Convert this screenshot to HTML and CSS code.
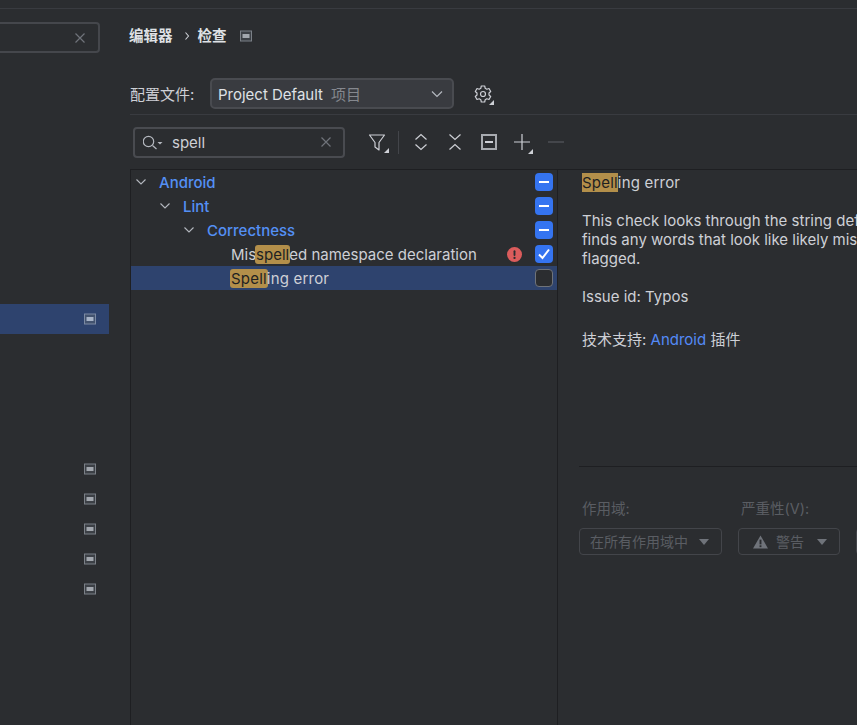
FILE: index.html
```html
<!DOCTYPE html>
<html lang="zh">
<head>
<meta charset="utf-8">
<title>检查</title>
<link rel="stylesheet" href="styles.css">
</head>
<body>
<div class="topbar"></div>
<div class="layout">
  <aside class="sidebar">
    <div class="side-search"><svg class="ico12" viewBox="0 0 12 12"><path d="M1.500 1.500l9 9M10.500 1.500l-9 9" stroke="#6f737a" stroke-width="1.200" fill="none"/></svg></div>
    <ul class="side-list">
      <li class="side-row selected"><svg class="proj" viewBox="0 0 12 12"><rect x=".5" y="1" width="11" height="10" fill="#43536f" stroke="#7c8aa3"/><rect x="2.500" y="4" width="7" height="4" fill="#a8b4c8"/></svg></li>
      <li class="side-spacer"></li>
      <li class="side-row"><svg class="proj" viewBox="0 0 12 12"><rect x=".5" y="1" width="11" height="10" fill="#3c4046" stroke="#7b8087"/><rect x="2.500" y="4" width="7" height="4" fill="#a2a7ae"/></svg></li>
      <li class="side-row"><svg class="proj" viewBox="0 0 12 12"><rect x=".5" y="1" width="11" height="10" fill="#3c4046" stroke="#7b8087"/><rect x="2.500" y="4" width="7" height="4" fill="#a2a7ae"/></svg></li>
      <li class="side-row"><svg class="proj" viewBox="0 0 12 12"><rect x=".5" y="1" width="11" height="10" fill="#3c4046" stroke="#7b8087"/><rect x="2.500" y="4" width="7" height="4" fill="#a2a7ae"/></svg></li>
      <li class="side-row"><svg class="proj" viewBox="0 0 12 12"><rect x=".5" y="1" width="11" height="10" fill="#3c4046" stroke="#7b8087"/><rect x="2.500" y="4" width="7" height="4" fill="#a2a7ae"/></svg></li>
      <li class="side-row"><svg class="proj" viewBox="0 0 12 12"><rect x=".5" y="1" width="11" height="10" fill="#3c4046" stroke="#7b8087"/><rect x="2.500" y="4" width="7" height="4" fill="#a2a7ae"/></svg></li>
    </ul>
  </aside>

  <main class="main">
    <div class="crumbs">
      <span class="crumb">编辑器</span>
      <svg class="crumb-sep" viewBox="0 0 6 10"><path d="M1.500 1.500L4.500 5 1.500 8.500" stroke="#ced0d6" stroke-width="1.100" fill="none"/></svg>
      <span class="crumb">检查</span>
      <svg class="proj crumb-proj" viewBox="0 0 12 12"><rect x=".5" y="1" width="11" height="10" fill="#3c4046" stroke="#7b8087"/><rect x="2.500" y="4" width="7" height="4" fill="#a2a7ae"/></svg>
    </div>

    <div class="profile">
      <span class="profile-label">配置文件:</span>
      <div class="combo">
        <span class="combo-name">Project Default</span>
        <span class="combo-hint">项目</span>
        <svg class="combo-arrow" viewBox="0 0 12 8"><path d="M1 1.500L6 6.500 11 1.500" stroke="#b4b8bf" stroke-width="1.200" fill="none"/></svg>
      </div>
      <span class="gear">
        <svg width="20" height="20" viewBox="0 0 20 20"><path d="M8.300 2h3.400l.5 2.300 1.600.9 2.200-.7 1.700 3-1.700 1.500v2l1.700 1.500-1.700 3-2.200-.7-1.600.9-.5 2.300H8.300l-.5-2.300-1.600-.9-2.200.7-1.700-3L4 11V9L2.300 7.500l1.700-3 2.200.7 1.600-.9z" stroke="#ced0d6" stroke-width="1.200" fill="none" stroke-linejoin="round"/><circle cx="10" cy="10" r="2.500" stroke="#ced0d6" stroke-width="1.200" fill="none"/></svg>
        <i class="corner"></i>
      </span>
    </div>

    <div class="toolbar">
      <div class="filter">
        <svg class="search-ico" viewBox="0 0 20 16"><circle cx="5.500" cy="7.500" r="5.200" stroke="#b4b8bf" stroke-width="1.200" fill="none"/><path d="M9.500 11.500l4 3.500" stroke="#b4b8bf" stroke-width="1.200"/><path d="M14.500 8h5L17 10.500z" fill="#b4b8bf"/></svg>
        <span class="filter-text">spell</span>
        <svg class="ico12 filter-x" viewBox="0 0 12 12"><path d="M1.500 1.500l9 9M10.500 1.500l-9 9" stroke="#6f737a" stroke-width="1.200" fill="none"/></svg>
      </div>
      <div class="tools">
        <span class="tool t-filter"><svg width="18" height="20" viewBox="0 0 18 20"><path d="M1.500 3h15l-5.500 7.500V18l-4-3v-4.500z" stroke="#ced0d6" stroke-width="1.200" fill="none" stroke-linejoin="round"/></svg><i class="corner"></i></span>
        <i class="tool-sep"></i>
        <span class="tool t-expand"><svg width="14" height="18" viewBox="0 0 14 18"><path d="M1.500 6.500L7 1.500l5.500 5M1.500 11.500L7 16.500l5.500-5" stroke="#ced0d6" stroke-width="1.200" fill="none"/></svg></span>
        <span class="tool t-collapse"><svg width="14" height="18" viewBox="0 0 14 18"><path d="M1.500 1.500L7 6.500l5.500-5M1.500 16.500L7 11.500l5.500 5" stroke="#ced0d6" stroke-width="1.200" fill="none"/></svg></span>
        <span class="tool t-box"><svg width="16" height="16" viewBox="0 0 16 16"><rect x="1" y="1" width="14" height="14" fill="none" stroke="#a8abb0" stroke-width="2"/><rect x="4" y="7" width="8" height="2" fill="#ced0d6"/></svg></span>
        <span class="tool t-plus"><svg width="16" height="16" viewBox="0 0 16 16"><path d="M0 8h16M8 0v16" stroke="#ced0d6" stroke-width="1.200"/></svg><i class="corner"></i></span>
        <span class="tool t-minus"><svg width="16" height="16" viewBox="0 0 16 16"><path d="M0 8h16" stroke="#55585e" stroke-width="1.200"/></svg></span>
      </div>
    </div>

    <div class="panes">
      <div class="tree">
        <div class="node lvl0"><svg class="chev" viewBox="0 0 10 6"><path d="M.5 .5L5 5 9.500 .5" stroke="#b4b8bf" stroke-width="1.100" fill="none"/></svg><span class="group">Android</span><i class="cb mixed"></i></div>
        <div class="node lvl1"><svg class="chev" viewBox="0 0 10 6"><path d="M.5 .5L5 5 9.500 .5" stroke="#b4b8bf" stroke-width="1.100" fill="none"/></svg><span class="group">Lint</span><i class="cb mixed"></i></div>
        <div class="node lvl2"><svg class="chev" viewBox="0 0 10 6"><path d="M.5 .5L5 5 9.500 .5" stroke="#b4b8bf" stroke-width="1.100" fill="none"/></svg><span class="group">Correctness</span><i class="cb mixed"></i></div>
        <div class="node lvl3"><span class="leaf">Mis<mark>spell</mark>ed namespace declaration</span>
          <svg class="err" width="15" height="15" viewBox="0 0 16 16"><circle cx="8" cy="8" r="8" fill="#db5c5c"/><rect x="7" y="3.500" width="2" height="6" rx="1" fill="#2b2d30"/><circle cx="8" cy="11.700" r="1.200" fill="#2b2d30"/></svg>
          <i class="cb checked"><svg width="18" height="18" viewBox="0 0 18 18"><path d="M4 9.500L7.500 13 14 4.500" stroke="#fff" stroke-width="2" fill="none"/></svg></i></div>
        <div class="node lvl3 current"><span class="leaf wide"><mark>Spell</mark>ing error</span><i class="cb empty"></i></div>
      </div>
      <div class="detail">
        <div class="desc">
          <p class="desc-title"><mark class="flat">Spell</mark>ing error</p>
          <p class="desc-para">This check looks through the string definitions, and if it<br>finds any words that look like likely misspellings, they are<br>flagged.</p>
          <p class="desc-para">Issue id: Typos</p>
          <p class="desc-support">技术支持: <span class="link">Android</span> 插件</p>
        </div>
        <div class="opts">
          <div class="opt">
            <label class="opt-label">作用域:</label>
            <div class="ddl ddl-scope"><span>在所有作用域中</span><i class="tri"></i></div>
          </div>
          <div class="opt">
            <label class="opt-label">严重性(V):</label>
            <div class="ddl ddl-sev"><svg width="15" height="14" viewBox="0 0 16 14"><path d="M8 0L16 14H0z" fill="#6f737a"/><rect x="7" y="4.500" width="2" height="5" fill="#2b2d30"/><rect x="7" y="10.500" width="2" height="2" fill="#2b2d30"/></svg><span>警告</span><i class="tri"></i></div>
          </div>
          <div class="ddl ddl-next"></div>
        </div>
      </div>
    </div>
  </main>
</div>
</body>
</html>
```

FILE: styles.css
```css
* { box-sizing: border-box; }
html, body { margin: 0; height: 100%; overflow: hidden; }
body {
  background: #2b2d30;
  color: #ced0d6;
  font: 15px/20px Inter, "Noto Sans CJK SC", sans-serif;
  width: 857px;
  height: 725px;
}
svg { display: block; flex: none; }
i { display: block; }

.topbar { height: 9px; border-bottom: 1px solid #393b40; }
.layout { display: flex; height: 716px; }

.sidebar { width: 109px; flex: none; margin-right: 21px; }
.side-search {
  height: 31px; width: 101px; margin: 13px 0 0 -1px;
  border: 2px solid #45474c; border-left: 0; border-radius: 0 4px 4px 0;
  display: flex; align-items: center; justify-content: flex-end; padding-right: 12px;
}
.ico12 { width: 12px; height: 12px; }
.side-list { list-style: none; margin: 251px 0 0; padding: 0; }
.side-row { height: 30px; display: flex; align-items: center; justify-content: flex-end; padding-right: 13px; }
.side-row.selected { background: #2e436e; }
.side-spacer { height: 120px; }
.proj { width: 12px; height: 12px; }

.main { flex: 1; min-width: 0; display: flex; flex-direction: column; }

.crumbs { display: flex; align-items: center; height: 20px; margin: 17px 0 0 -1px; font-size: 14.500px; font-weight: 600; color: #dfe1e5; }
.crumb-sep { width: 6px; height: 10px; margin: 0 8px 0 11px; }
.crumb-proj { margin-left: 13px; }

.profile { display: flex; align-items: center; height: 31px; margin-top: 32px; }
.profile-label { width: 80px; padding-top: 2px; }
.combo {
  width: 244px; height: 31px; display: flex; align-items: center; padding: 0 9px 0 6px;
  background: #393b40; border: 2px solid #494b50; border-radius: 5px;
}
.combo-name { color: #dfe1e5; padding-top: 2px; }
.combo-hint { color: #85888e; margin-left: 8px; padding-top: 2px; }
.combo-arrow { width: 12px; height: 8px; margin-left: auto; }
.gear { position: relative; margin-left: 19px; width: 20px; height: 20px; }
.corner {
  position: absolute; right: -1px; bottom: -1px; width: 0; height: 0;
  border-style: solid; border-width: 0 0 5px 5px; border-color: transparent transparent #ced0d6 transparent;
}

.toolbar {
  display: flex; align-items: center; height: 55px; margin-top: 5px;
  border-top: 1px solid #393b40;
}
.filter {
  margin-left: 3px; width: 212px; height: 31px; display: flex; align-items: center;
  padding: 0 11px 0 8px; border: 2px solid #494b50; border-radius: 4px;
}
.search-ico { width: 20px; height: 16px; }
.filter-text { margin-left: 9px; padding-top: 2px; }
.filter-x { margin-left: auto; }
.tools { display: flex; align-items: center; margin-left: 23px; }
.tool { position: relative; display: block; }
.tool-sep { width: 1px; height: 23px; background: #43454a; margin: 0 15px 0 12px; }
.t-collapse { margin-left: 20px; }
.t-box { margin-left: 19px; }
.t-plus { margin-left: 17px; }
.t-minus { margin-left: 18px; }
.t-filter .corner { right: -3px; bottom: -1px; }
.t-plus .corner { right: -3px; bottom: -4px; }

.panes { flex: 1; display: flex; border-top: 1px solid #1e1f22; min-height: 0; }
.tree { width: 428px; flex: none; border-left: 1px solid #1e1f22; border-right: 1px solid #1e1f22; }
.node { height: 24px; display: flex; align-items: center; position: relative; padding-right: 4px; }
.chev { width: 10px; height: 6px; margin-right: 13px; }
.lvl0 { padding-left: 5px; }
.lvl1 { padding-left: 29px; }
.lvl2 { padding-left: 53px; }
.lvl3 { padding-left: 100px; }
.group { color: #5490f5; font-weight: 500; padding-top: 2px; }
.leaf { color: #ced0d6; padding-top: 2px; }
.leaf.wide, .desc-title { letter-spacing: .2px; }
.current { background: #2e436e; }
mark { background: #b38f4a; color: #1e1f22; border-radius: 3px; padding: 0 1px; margin: 0 -1px; }
mark.flat { border-radius: 0; padding: 0; margin: 0; }
.err { position: absolute; right: 35px; top: 5px; }
.cb { margin-left: auto; width: 18px; height: 18px; border-radius: 4px; flex: none; position: relative; }
.cb.mixed, .cb.checked { background: #3574f0; }
.cb.mixed::after { content: ""; position: absolute; left: 4px; right: 4px; top: 8px; height: 2px; background: #fff; }
.cb.empty { background: #2b2d30; border: 1.500px solid #6f737a; }

.detail { flex: 1; min-width: 0; display: flex; flex-direction: column; overflow: hidden; }
.desc { height: 296px; margin-left: 24px; padding-top: 3px; white-space: nowrap; }
.desc p { margin: 0; line-height: 19px; }
.desc .desc-para { margin-top: 19px; }
.desc .desc-support { margin-top: 24px; }
.link { color: #548af7; }
.opts {
  margin-left: 21px; border-top: 1px solid #1e1f22; padding-top: 32px; display: flex; align-items: flex-start;
  color: #5a5d63; font-size: 14.500px;
}
.opt { margin-right: 16px; flex: none; }
.opt-label { display: block; padding-left: 3px; height: 20px; margin-bottom: 9px; }
.ddl { height: 27px; display: flex; align-items: center; border: 1px solid #43454a; border-radius: 4px; padding: 0 12px 0 10px; font-size: 14px; }
.ddl-scope { width: 143px; }
.ddl-sev { width: 102px; gap: 8px; padding-left: 14px; }
.ddl-next { margin-top: 29px; width: 20px; flex: none; }
.tri { margin-left: auto; border-style: solid; border-width: 6px 5px 0; border-color: #6f737a transparent transparent; }
```
